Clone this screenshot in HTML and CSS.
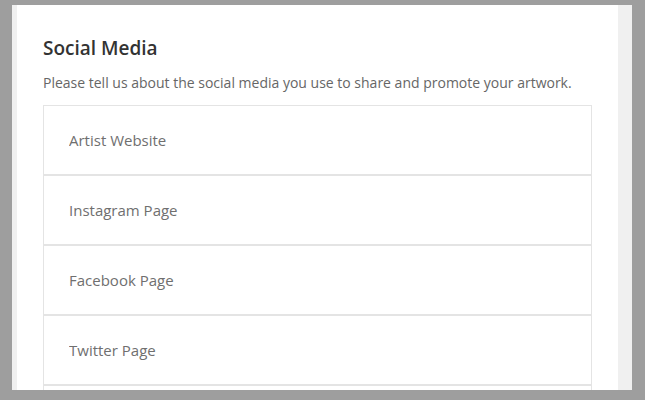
FILE: index.html
```html
<!DOCTYPE html>
<html lang="en">

<head>
  <meta charset="UTF-8">
  <meta name="viewport" content="width=device-width, initial-scale=1.0">
  <title>Social Media</title>
  <link rel="stylesheet" href="styles.css">
</head>

<body>
  <div class="frame">
    <div class="panel">
      <h2 class="panel-title">Social Media</h2>
      <p class="panel-desc">Please tell us about the social media you use to share and promote your artwork.</p>
      <div class="field-list">
        <input type="text" class="field" placeholder="Artist Website">
        <input type="text" class="field" placeholder="Instagram Page">
        <input type="text" class="field" placeholder="Facebook Page">
        <input type="text" class="field" placeholder="Twitter Page">
        <input type="text" class="field" placeholder="Other">
      </div>
    </div>
  </div>
</body>

</html>
```

FILE: styles.css
```css
* {
  padding: 0;
  margin: 0;
  box-sizing: border-box;
}

html,
body {
  height: 100%;
  overflow: hidden;
}

body {
  background: #9e9e9e;
  font-family: "Open Sans", "Liberation Sans", sans-serif;
  padding: 5px 13px 10px 12px;
}

.frame {
  height: 385px;
  width: 620px;
  background: #f0f0f0;
  padding: 0 14px 0 5px;
}

.panel {
  height: 100%;
  background: #fff;
  padding: 30px 26px 0 26px;
  overflow: hidden;
}

.panel-title {
  font-size: 19px;
  font-weight: 600;
  color: #333;
  line-height: 26px;
}

.panel-desc {
  margin-top: 12px;
  font-size: 14px;
  color: #666;
  line-height: 20px;
}

.field-list {
  margin-top: 12px;
  display: flex;
  flex-direction: column;
}

.field {
  display: block;
  width: 100%;
  height: 70px;
  border: 1px solid #e4e4e4;
  padding: 0 25px;
  font-family: inherit;
  font-size: 15px;
  color: #333;
  outline: none;
}

.field::placeholder {
  color: #6f6f6f;
}
```
